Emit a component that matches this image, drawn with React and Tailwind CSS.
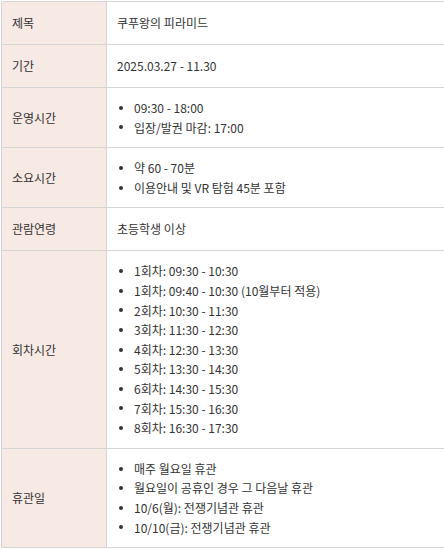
import React from "react";

const rows = [
  { label: "제목", text: "쿠푸왕의 피라미드" },
  { label: "기간", text: "2025.03.27 - 11.30" },
  { label: "운영시간", items: ["09:30 - 18:00", "입장/발권 마감: 17:00"] },
  { label: "소요시간", items: ["약 60 - 70분", "이용안내 및 VR 탐험 45분 포함"] },
  { label: "관람연령", text: "초등학생 이상" },
  {
    label: "회차시간",
    items: [
      "1회차: 09:30 - 10:30",
      "1회차: 09:40 - 10:30 (10월부터 적용)",
      "2회차: 10:30 - 11:30",
      "3회차: 11:30 - 12:30",
      "4회차: 12:30 - 13:30",
      "5회차: 13:30 - 14:30",
      "6회차: 14:30 - 15:30",
      "7회차: 15:30 - 16:30",
      "8회차: 16:30 - 17:30",
    ],
  },
  {
    label: "휴관일",
    items: [
      "매주 월요일 휴관",
      "월요일이 공휴인 경우 그 다음날 휴관",
      "10/6(월): 전쟁기념관 휴관",
      "10/10(금): 전쟁기념관 휴관",
    ],
  },
];

export default function App() {
  return (
    <div
      className="w-[444px] h-[550px] overflow-hidden bg-white pl-px pt-px text-[12px] text-[#333]"
      style={{ fontFamily: '"Noto Sans CJK KR", "Noto Sans", sans-serif' }}
    >
      <div className="w-[470px] border-l border-t border-[#d5d5d5]">
        {rows.map((row) => (
          <div key={row.label} className="flex border-b border-[#d5d5d5]">
            <div className="w-[105px] shrink-0 flex items-center bg-[#f7e9e4] border-r border-[#d5d5d5] pl-[10px]">
              {row.label}
            </div>
            <div className="flex-1 pl-[10px]">
              {row.text ? (
                <p className="py-[11px] leading-[20px]">{row.text}</p>
              ) : (
                <ul className="py-[10px]">
                  {row.items.map((it, i) => (
                    <li key={i} className="flex items-center leading-[19.6px]">
                      <span className="w-[4px] h-[4px] rounded-full bg-[#333] ml-[2px] mr-[11px] shrink-0" />
                      {it}
                    </li>
                  ))}
                </ul>
              )}
            </div>
          </div>
        ))}
      </div>
    </div>
  );
}
